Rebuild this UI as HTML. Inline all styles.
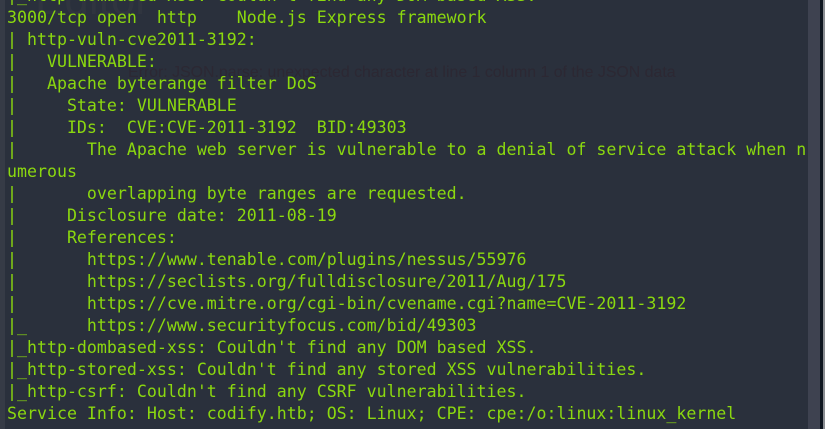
<!DOCTYPE html>
<html><head><meta charset="utf-8"><style>
html,body{margin:0;padding:0}
body{width:825px;height:429px;overflow:hidden;background:#2a303c;position:relative}
.l{position:absolute;left:0;top:0;width:5px;height:429px;background:#363b46}
.sb{position:absolute;left:808px;top:0;width:12px;height:429px;background:#3e4250}
.dk{position:absolute;left:820px;top:0;width:3px;height:429px;background:#0f1620}
.gr{position:absolute;left:823px;top:0;width:2px;height:429px;background:#8a8d92}
.ed{position:absolute;left:35px;top:-25px;font:44px "Liberation Sans",sans-serif;color:#30353f}
.er{position:absolute;left:128px;top:64px;font:15.9px "Liberation Sans",sans-serif;color:#2c2833;white-space:nowrap}
pre{position:absolute;left:7px;top:-15px;margin:0;font:16.6px/22px "DejaVu Sans Mono",monospace;color:#8bd80f}
</style></head><body>
<div class="l"></div>
<div class="ed">Editor</div>
<div class="er">Error: JSON.parse: unexpected character at line 1 column 1 of the JSON data</div>
<pre>|_http-dombased-xss: Couldn't find any DOM based XSS.
3000/tcp open  http    Node.js Express framework
| http-vuln-cve2011-3192:
|   VULNERABLE:
|   Apache byterange filter DoS
|     State: VULNERABLE
|     IDs:  CVE:CVE-2011-3192  BID:49303
|       The Apache web server is vulnerable to a denial of service attack when n
umerous
|       overlapping byte ranges are requested.
|     Disclosure date: 2011-08-19
|     References:
|       https://www.tenable.com/plugins/nessus/55976
|       https://seclists.org/fulldisclosure/2011/Aug/175
|       https://cve.mitre.org/cgi-bin/cvename.cgi?name=CVE-2011-3192
|_      https://www.securityfocus.com/bid/49303
|_http-dombased-xss: Couldn't find any DOM based XSS.
|_http-stored-xss: Couldn't find any stored XSS vulnerabilities.
|_http-csrf: Couldn't find any CSRF vulnerabilities.
Service Info: Host: codify.htb; OS: Linux; CPE: cpe:/o:linux:linux_kernel</pre>
<div class="sb"></div><div class="dk"></div><div class="gr"></div>
</body></html>
